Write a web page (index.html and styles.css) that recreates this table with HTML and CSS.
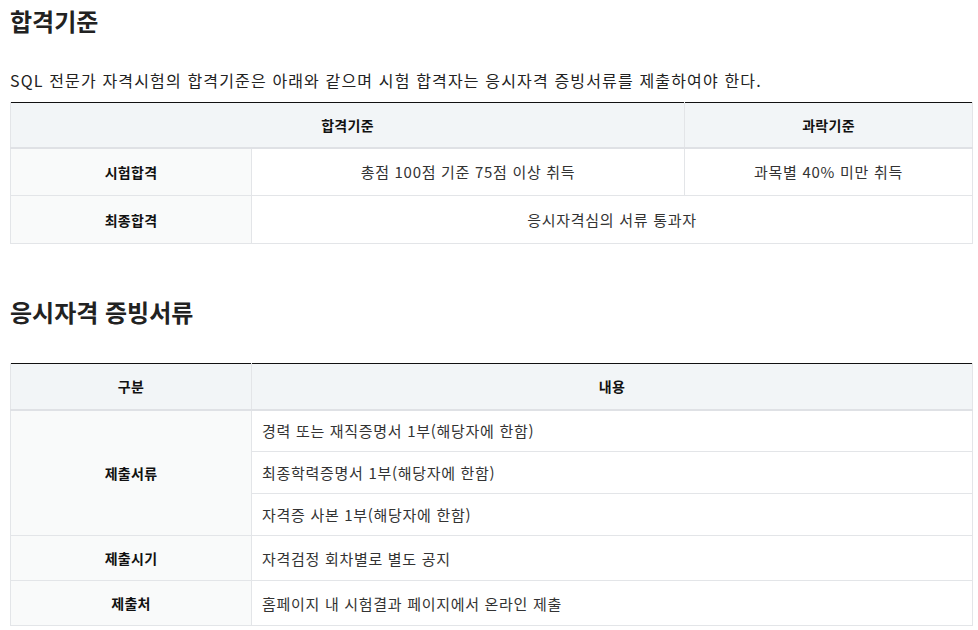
FILE: index.html
```html
<!DOCTYPE html>
<html lang="ko">
<head>
    <meta charset="UTF-8">
    <title>합격기준</title>
    <link rel="stylesheet" href="styles.css">
</head>
<body>
    <div class="section">
        <h2>합격기준</h2>
        <p class="desc">SQL 전문가 자격시험의 합격기준은 아래와 같으며 시험 합격자는 응시자격 증빙서류를 제출하여야 한다.</p>
        <table class="info-table">
            <colgroup>
                <col class="col-head">
                <col class="col-mid">
                <col>
            </colgroup>
            <thead>
                <tr>
                    <th colspan="2">합격기준</th>
                    <th>과락기준</th>
                </tr>
            </thead>
            <tbody>
                <tr>
                    <th class="row-head">시험합격</th>
                    <td class="center">총점 100점 기준 75점 이상 취득</td>
                    <td class="center">과목별 40% 미만 취득</td>
                </tr>
                <tr>
                    <th class="row-head">최종합격</th>
                    <td class="center" colspan="2">응시자격심의 서류 통과자</td>
                </tr>
            </tbody>
        </table>
    </div>

    <div class="section second">
        <h2>응시자격 증빙서류</h2>
        <table class="info-table docs">
            <colgroup>
                <col class="col-head">
                <col>
            </colgroup>
            <thead>
                <tr>
                    <th>구분</th>
                    <th>내용</th>
                </tr>
            </thead>
            <tbody>
                <tr>
                    <th class="row-head" rowspan="3">제출서류</th>
                    <td class="sub">경력 또는 재직증명서 1부(해당자에 한함)</td>
                </tr>
                <tr>
                    <td class="sub">최종학력증명서 1부(해당자에 한함)</td>
                </tr>
                <tr>
                    <td class="sub">자격증 사본 1부(해당자에 한함)</td>
                </tr>
                <tr>
                    <th class="row-head">제출시기</th>
                    <td>자격검정 회차별로 별도 공지</td>
                </tr>
                <tr>
                    <th class="row-head">제출처</th>
                    <td>홈페이지 내 시험결과 페이지에서 온라인 제출</td>
                </tr>
            </tbody>
        </table>
    </div>
</body>
</html>
```

FILE: styles.css
```css
body {
    font-family: "Noto Sans CJK KR", "Noto Sans", sans-serif;
    margin: 0;
    padding: 0 5px 0 10px;
    color: #222;
    background-color: #fff;
}
h2 {
    font-size: 24px;
    font-weight: bold;
    color: #222;
    margin: 0;
    padding-top: 4px;
    line-height: 34px;
}
.desc {
    font-size: 16px;
    letter-spacing: 1.15px;
    margin: 31px 0 0;
    line-height: 22px;
    color: #222;
}
.info-table {
    width: 963px;
    border-collapse: collapse;
    table-layout: fixed;
    border-top: 1px solid #111;
    margin-top: 11px;
    font-size: 15px;
    letter-spacing: 0.7px;
    color: #333;
}
.col-head {
    width: 241px;
}
.col-mid {
    width: 433px;
}
.info-table th,
.info-table td {
    border: 1px solid #e3e5e8;
    height: 48px;
    padding: 0 10px;
    box-sizing: border-box;
}
.info-table thead th {
    background-color: #f2f5f7;
    color: #111;
    font-weight: bold;
    font-size: 14px;
    letter-spacing: 0.3px;
    height: 45px;
    border-top: none;
    border-bottom: 2px solid #dfe1e5;
}
.info-table .row-head {
    background-color: #f9fafa;
    color: #111;
    font-weight: bold;
    font-size: 14px;
    letter-spacing: 0.3px;
}
.center {
    text-align: center;
}
.docs thead th {
    height: 46px;
}
.docs td,
.docs tbody .row-head {
    text-align: left;
    height: 45px;
}
.docs tbody .row-head {
    text-align: center;
}
.docs .sub {
    height: 42px;
}
.second {
    margin-top: 47px;
}
.second .info-table {
    margin-top: 34px;
}
```
